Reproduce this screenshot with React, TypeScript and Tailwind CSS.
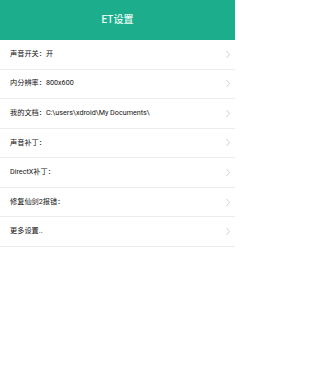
import React from 'react'

const rows = [
    '声音开关：开',
    '内分辨率：800x600',
    '我的文档：C:\\users\\xdroid\\My Documents\\',
    '声音补丁：',
    'DirectX补丁：',
    '修复仙剑2报错：',
    '更多设置..',
]

export default function App() {
    return (
        <div className="w-[235px] h-[390px] bg-white" style={{ fontFamily: '"Roboto", "Noto Sans CJK SC", sans-serif' }}>
            <div className="h-[39.5px] bg-[#1cae8c] flex items-center justify-center">
                <span className="text-[10px] text-[#e6fbf4] font-medium">ET设置</span>
            </div>
            <ul>
                {rows.map((r, i) => (
                    <li key={i} className={`${i === 0 ? 'h-[30px]' : 'h-[29.6px]'} flex items-center justify-between pl-[10px] pr-[4px] border-b border-[#ececec]`}>
                        <span className="text-[7.2px] text-[#111] font-normal whitespace-nowrap">{r}</span>
                        <svg className="w-[6px] h-[9px]" viewBox="0 0 6 9" fill="none">
                            <path d="M1.5 1l3 3.5-3 3.5" stroke="#c4c4c4" strokeWidth="0.8" />
                        </svg>
                    </li>
                ))}
            </ul>
        </div>
    )
}
